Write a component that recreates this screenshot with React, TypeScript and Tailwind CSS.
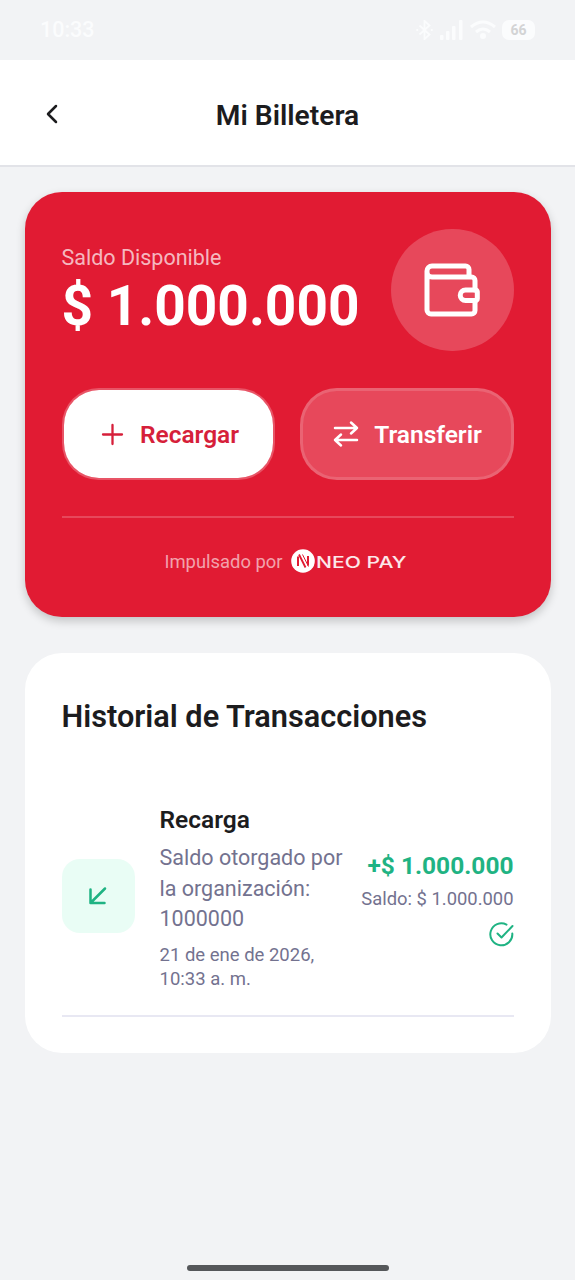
import React from "react";

const Wallet = () => (
  <svg className="ml-[2px] mt-[1px] h-[56px] w-[58px]" viewBox="0 0 58 56" fill="none" stroke="white" strokeWidth="5" strokeLinecap="round" strokeLinejoin="round">
    <path d="M45 14V6.500a3.500 3.500 0 0 0-3.500-3.500H8a5 5 0 0 0-5 5v39a4 4 0 0 0 4 4H47.500a3.500 3.500 0 0 0 3.500-3.500V37.500M3 9a5 5 0 0 0 5 5H47.500a3.500 3.500 0 0 1 3.500 3.500V27" />
    <path d="M41.500 27h10a1.800 1.800 0 0 1 1.800 1.800v6.900a1.800 1.800 0 0 1-1.800 1.800h-10a5.250 5.250 0 0 1 0-10.500Z" />
  </svg>
);

const StatusBar = () => (
  <div className="flex h-[60px] shrink-0 items-center justify-between pl-[40px] pr-[40px] text-[#fbfcfd]">
    <span className="text-[21.500px] font-medium leading-none">10:33</span>
    <div className="flex items-center gap-[6px]">
      <svg className="h-[20px] w-[19px]" viewBox="0 0 20 22" fill="none" stroke="currentColor" strokeWidth="2">
        <path d="M4.500 6l11 10-5.500 5V1l5.500 5-11 10M1 11h2M17 11h2" />
      </svg>
      <svg className="h-[20px] w-[24px]" viewBox="0 0 24 20" fill="currentColor">
        <rect x="0" y="15" width="3.500" height="5" rx="1" />
        <rect x="6" y="11" width="3.500" height="9" rx="1" />
        <rect x="12" y="6" width="3.500" height="14" rx="1" />
        <rect x="19" y="0" width="3.500" height="20" rx="1" />
      </svg>
      <svg className="h-[20px] w-[26px]" viewBox="0 0 26 20" fill="none" stroke="currentColor" strokeWidth="3">
        <path d="M1 7q12-10 24 0M6 12q7-6 14 0" />
        <circle cx="13" cy="16" r="1.500" fill="currentColor" />
      </svg>
      <span className="flex h-[20px] w-[33px] items-center justify-center rounded-[7px] bg-[#fbfcfd] text-[14px] font-bold leading-none text-[#d3d4d5]">66</span>
    </div>
  </div>
);

const NeoLogo = () => (
  <div className="flex items-center">
    <svg className="-mt-[1px] h-[24px] w-[24px]" viewBox="0 0 24 24">
      <circle cx="12" cy="12" r="11.800" fill="white" />
      <g fill="none" stroke="#e11b33">
        <path d="M7 7.500V17" strokeWidth="2" />
        <path d="M17 7v9.500" strokeWidth="2" />
        <path d="M8 5.500L14.500 18.500" strokeWidth="1.800" />
        <path d="M11.500 5.500L17.500 17.500" strokeWidth="1" />
      </g>
    </svg>
    <span className="block w-[92px] whitespace-nowrap pl-[1px] font-['Inter'] text-[16px] font-medium leading-[24px] text-white/90">
      <span className="inline-block origin-left scale-x-[1.320]">NEO PAY</span>
    </span>
  </div>
);

const BalanceCard = () => (
  <section className="mx-[24.500px] mt-[25px] flex h-[424.500px] shrink-0 flex-col rounded-[37px] bg-[#e11b33] px-[37px] pt-[37px] shadow-[0_4px_10px_rgba(0,0,0,0.200)]">
    <div className="flex h-[122px] items-center justify-between">
      <div className="flex flex-col pt-[2px]">
        <span className="text-[21.500px] leading-[29px] text-white/70">Saldo Disponible</span>
        <span className="whitespace-nowrap pt-[1px] text-[55px] font-bold leading-[66px] text-white">$ 1.000.000</span>
      </div>
      <div className="flex h-[122.500px] w-[122.500px] shrink-0 items-center justify-center rounded-full bg-white/20">
        <Wallet />
      </div>
    </div>
    <div className="mt-[37px] flex h-[92px] gap-[25px]">
      <button className="flex flex-1 items-center justify-center gap-[15px] rounded-[37px] border-[2.500px] border-white/25 bg-white bg-clip-padding pl-[3px] pt-[3px] text-[24.500px] font-semibold text-[#d61f3a]">
        <svg className="-mt-[3px] h-[25px] w-[25px]" viewBox="0 0 25 25" stroke="currentColor" strokeWidth="2.300" strokeLinecap="round">
          <path d="M12.500 3v19M3 12.500h19" />
        </svg>
        Recargar
      </button>
      <button className="flex flex-1 items-center justify-center gap-[15px] rounded-[37px] border-[3px] border-white/15 bg-white/20 pl-[2px] pt-[3px] text-[24.500px] font-semibold text-white">
        <svg className="-mt-[3px] h-[28px] w-[26px]" viewBox="0 0 26 28" fill="none" stroke="currentColor" strokeWidth="2.500" strokeLinecap="round" strokeLinejoin="round">
          <path d="M2 8h22M18 2.500L24 8l-6 5.500M24 20H2M8 14.500L2 20l6 5.500" />
        </svg>
        Transferir
      </button>
    </div>
    <div className="mt-[36px] flex items-center justify-center gap-[8px] border-t-[2px] border-white/20 pr-[4px] pt-[31px]">
      <span className="pt-[1px] text-[18.400px] leading-[24px] text-white/60">Impulsado por</span>
      <NeoLogo />
    </div>
  </section>
);

const History = () => (
  <section className="mx-[24.500px] mt-[36.500px] flex h-[400px] shrink-0 flex-col rounded-[37px] bg-white px-[37px] pt-[44px]">
    <h2 className="text-[30.700px] font-semibold leading-[40px] text-[#1c1c1e]">Historial de Transacciones</h2>
    <div className="mt-[66px] flex h-[214px] items-center border-b-[2px] border-[#e8e8f3] pb-[23px]">
      <div className="-mt-[3px] flex h-[73.500px] w-[73.500px] shrink-0 items-center justify-center rounded-[18px] bg-[#e9fdf5]">
        <svg className="h-[20px] w-[20px]" viewBox="0 0 20 20" fill="none" stroke="#1fb383" strokeWidth="2.500" strokeLinecap="round" strokeLinejoin="round">
          <path d="M17 2.500L2.500 17M2.500 3.500V17h14" />
        </svg>
      </div>
      <div className="ml-[24.500px] flex w-[200px] shrink-0 flex-col text-[#73728f]">
        <span className="text-[24.500px] font-semibold leading-[33px] text-[#1c1c1e]">Recarga</span>
        <p className="mt-[7px] text-[21.500px] leading-[30.600px]">Saldo otorgado por<br />la organización:<br />1000000</p>
        <p className="mt-[8px] text-[18.500px] leading-[24.500px]">21 de ene de 2026,<br />10:33 a. m.</p>
      </div>
      <div className="flex flex-1 flex-col items-end whitespace-nowrap">
        <span className="text-[24.500px] font-bold leading-[33px] text-[#1fb383]">+$ 1.000.000</span>
        <span className="mt-[4px] text-[18.400px] leading-[25px] text-[#73728f]">Saldo: $ 1.000.000</span>
        <svg className="mt-[11px] h-[25px] w-[25px]" viewBox="0 0 25 25" fill="none" stroke="#1fb383" strokeWidth="2" strokeLinecap="round" strokeLinejoin="round">
          <path d="M23.300 11.500A11 11 0 1 1 17.500 2.600" />
          <path d="M8.500 11.500l4 4L23.500 4" />
        </svg>
      </div>
    </div>
  </section>
);

export default function App() {
  return (
    <div className="flex h-[1280px] w-[575px] flex-col overflow-hidden bg-[#f2f3f5] font-['Roboto',sans-serif]">
      <StatusBar />
      <header className="grid h-[107px] shrink-0 grid-cols-[100px_1fr_100px] items-center border-b-[2px] border-[#e2e3e8] bg-white">
        <svg className="ml-[45px] mt-[2px] h-[20px] w-[14px]" viewBox="0 0 14 20" fill="none" stroke="#1c1c1e" strokeWidth="2.500" strokeLinecap="round" strokeLinejoin="round">
          <path d="M11 2L3 10l8 8" />
        </svg>
        <h1 className="pt-[6px] text-center text-[28.200px] font-semibold leading-[36px] text-[#1c1c1e]">Mi Billetera</h1>
      </header>
      <BalanceCard />
      <History />
      <div className="mx-auto mb-[9px] mt-auto h-[6px] w-[202px] rounded-full bg-[#55575a]" />
    </div>
  );
}
